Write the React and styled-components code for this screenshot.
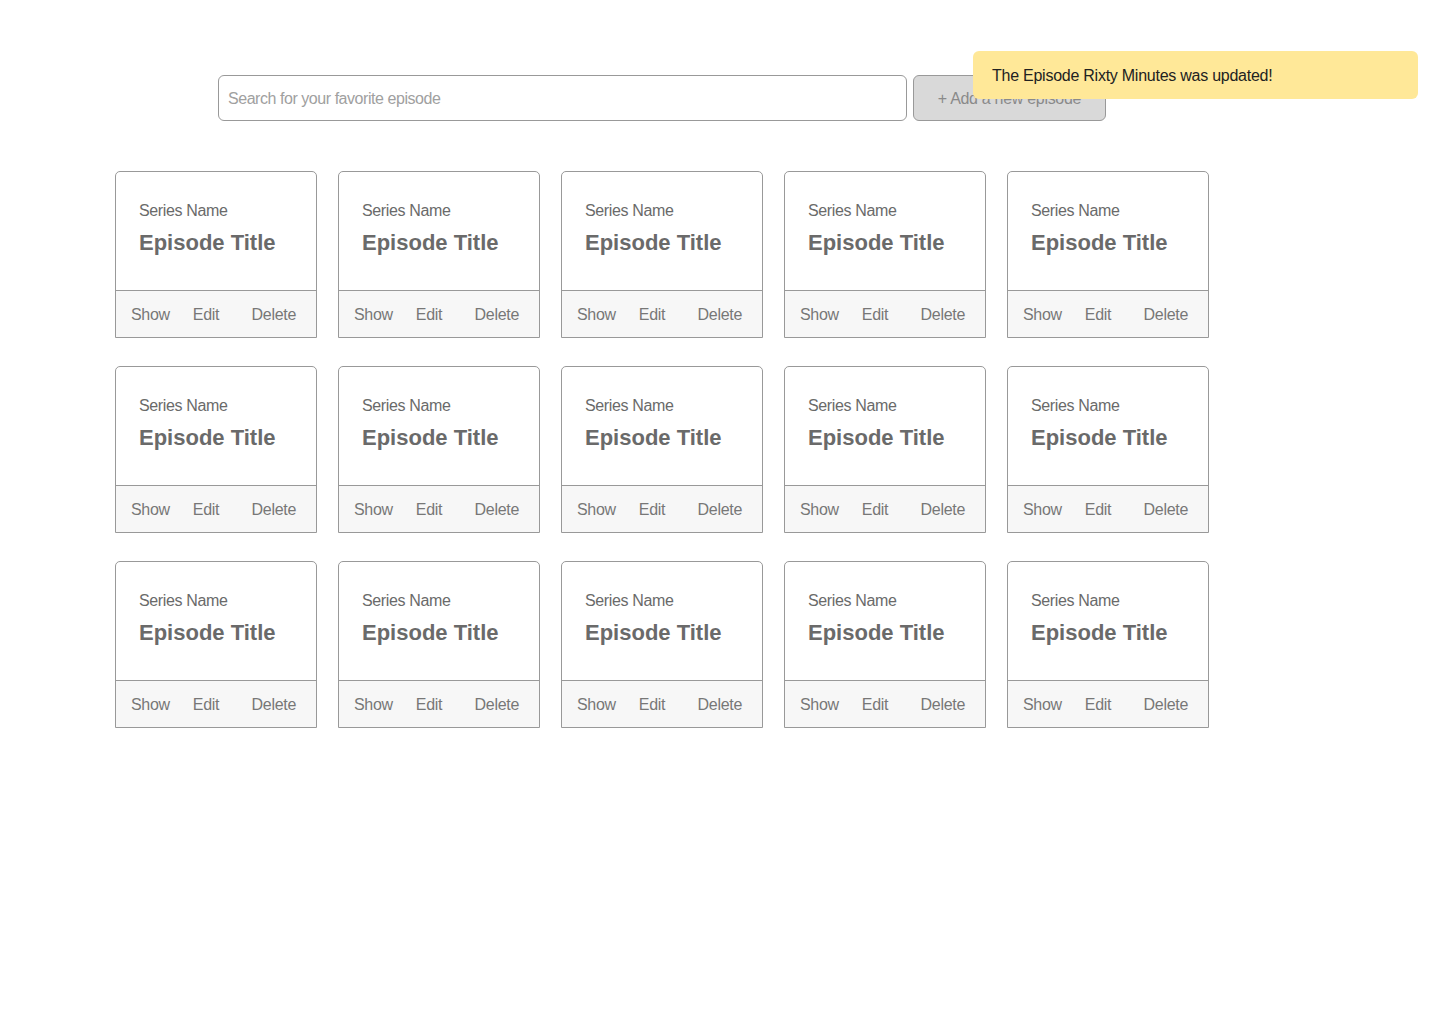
import React from 'react'
import styled, { createGlobalStyle } from 'styled-components'

const GlobalStyle = createGlobalStyle`
  body {
    margin: 0;
    background: #ffffff;
    font-family: 'Liberation Sans', Arial, sans-serif;
  }
`

const Page = styled.div`
  position: relative;
  width: 1440px;
  height: 1024px;
  padding-top: 75px;
  box-sizing: border-box;
`

const Toolbar = styled.div`
  display: flex;
  gap: 6px;
  margin-left: 218px;
`

const SearchInput = styled.input`
  width: 689px;
  height: 46px;
  box-sizing: border-box;
  border: 1px solid #999999;
  border-radius: 6px;
  padding: 2px 9px 0;
  font-family: inherit;
  font-size: 16px;
  letter-spacing: -0.45px;
  color: #666;
  outline: none;
  &::placeholder {
    color: #a0a0a0;
  }
`

const AddButton = styled.button`
  width: 193px;
  height: 46px;
  box-sizing: border-box;
  border: 1px solid #999999;
  border-radius: 6px;
  background: #d9d9d9;
  color: #8a8a8a;
  font-family: inherit;
  font-size: 16px;
  letter-spacing: -0.3px;
  padding-top: 2px;
`

const Toast = styled.div`
  position: absolute;
  top: 51px;
  left: 973px;
  width: 445px;
  height: 48px;
  box-sizing: border-box;
  display: flex;
  align-items: center;
  padding: 2px 0 0 19px;
  background: #ffe898;
  border-radius: 6px;
  color: #222222;
  font-size: 16px;
  letter-spacing: -0.25px;
`

const Grid = styled.div`
  display: grid;
  grid-template-columns: repeat(5, 202px);
  column-gap: 21px;
  row-gap: 28px;
  margin: 50px 0 0 115px;
`

const Card = styled.div`
  border: 1px solid #999999;
  border-radius: 5px 5px 0 0;
  display: flex;
  flex-direction: column;
`

const CardBody = styled.div`
  height: 118px;
  box-sizing: border-box;
  padding: 29px 23px 0;
`

const SeriesName = styled.div`
  font-size: 16px;
  line-height: 20px;
  letter-spacing: -0.35px;
  color: #6a6a6a;
`

const EpisodeTitle = styled.div`
  margin-top: 8px;
  font-size: 22px;
  line-height: 28px;
  font-weight: 700;
  color: #6a6a6a;
`

const CardFooter = styled.div`
  height: 45px;
  border-top: 1px solid #999999;
  background: #f7f7f7;
  display: flex;
  align-items: center;
  padding: 1px 20px 0 15px;
`

const Action = styled.span`
  font-size: 16px;
  letter-spacing: -0.3px;
  color: #777777;
  margin-left: ${(p) => (p.$push ? 'auto' : p.$gap || 0)};
`

const episodes = Array.from({ length: 15 }, (_, i) => ({
  id: i,
  series: 'Series Name',
  title: 'Episode Title',
}))

export default function App() {
  return (
    <Page>
      <GlobalStyle />
      <Toolbar>
        <SearchInput placeholder='Search for your favorite episode' />
        <AddButton>+ Add a new episode</AddButton>
      </Toolbar>
      <Toast>The Episode Rixty Minutes was updated!</Toast>
      <Grid>
        {episodes.map((ep) => (
          <Card key={ep.id}>
            <CardBody>
              <SeriesName>{ep.series}</SeriesName>
              <EpisodeTitle>{ep.title}</EpisodeTitle>
            </CardBody>
            <CardFooter>
              <Action>Show</Action>
              <Action $gap='23px'>Edit</Action>
              <Action $push>Delete</Action>
            </CardFooter>
          </Card>
        ))}
      </Grid>
    </Page>
  )
}
